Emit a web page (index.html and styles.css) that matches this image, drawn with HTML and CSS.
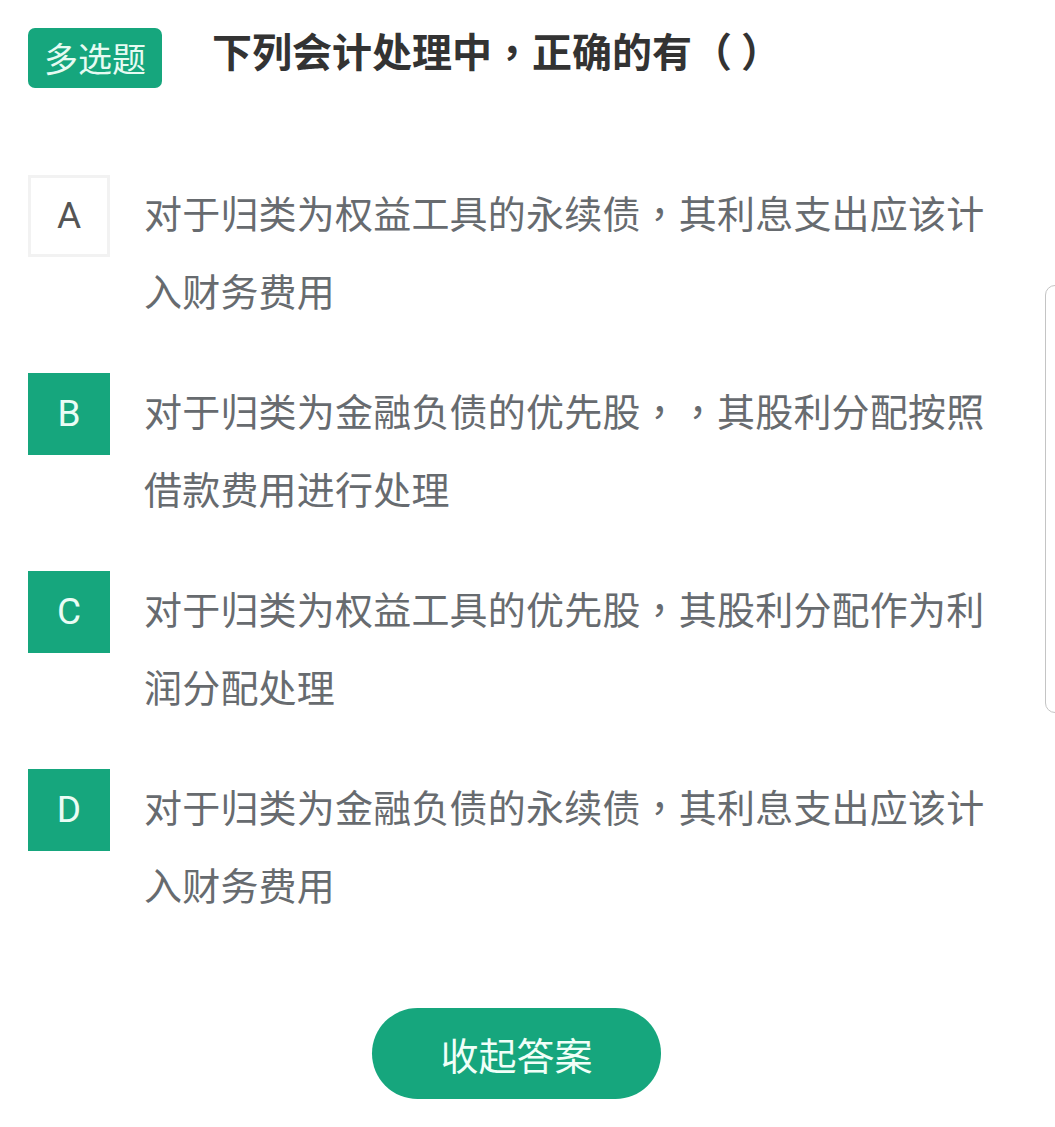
FILE: index.html
```html
<!DOCTYPE html>
<html lang="zh-CN">

<head>
    <meta charset="utf-8">
    <meta name="viewport" content="width=device-width, initial-scale=1.0">
    <title>多选题</title>

    <link rel="stylesheet" href="styles.css">
</head>

<body>

<header class="kop">
    <span class="type">多选题</span>
    <h1>下列会计处理中<span class="tegn" lang="zh-TW">，</span>正确的有<span class="tegn" lang="zh-TW">（ ）</span></h1>
</header>

<main>
    <section id="valg">
        <article class="valg">
            <div class="bogstav">A</div>
            <p>对于归类为权益工具的永续债<span class="tegn" lang="zh-TW">，</span>其利息支出应该计入财务费用</p>
        </article>
        <article class="valg valgt">
            <div class="bogstav">B</div>
            <p>对于归类为金融负债的优先股<span class="tegn" lang="zh-TW">，，</span>其股利分配按照借款费用进行处理</p>
        </article>
        <article class="valg valgt">
            <div class="bogstav">C</div>
            <p>对于归类为权益工具的优先股<span class="tegn" lang="zh-TW">，</span>其股利分配作为利润分配处理</p>
        </article>
        <article class="valg valgt">
            <div class="bogstav">D</div>
            <p>对于归类为金融负债的永续债<span class="tegn" lang="zh-TW">，</span>其利息支出应该计入财务费用</p>
        </article>
    </section>

    <div class="knap-boks">
        <button class="knap">收起答案</button>
    </div>
</main>

<div class="rulle"></div>

</body>

</html>
```

FILE: styles.css
```css
body {
    margin: 0;
    background: #fff;
    font-family: "Noto Sans CJK SC", "Noto Sans", sans-serif;
    overflow: hidden;
}

/* centrerede kommaer og parenteser som på telefonen */
.tegn {
    font-family: "Noto Sans CJK TC", "Noto Sans CJK SC", sans-serif;
}

.kop {
    display: flex;
    align-items: center;
    padding: 28px 0 0 28px;
    height: 60px;
}

.type {
    box-sizing: border-box;
    width: 134px;
    height: 60px;
    border-radius: 7px;
    background: #16a67d;
    color: #e6fbf2;
    font-size: 34px;
    line-height: 60px;
    text-align: center;
}

.kop h1 {
    margin: 0 0 16px 50px;
    font-size: 40px;
    font-weight: bold;
    color: #333;
    line-height: 50px;
}

#valg {
    display: flex;
    flex-direction: column;
    gap: 44px;
    padding: 87px 0 0 28px;
}

.valg {
    display: flex;
    align-items: flex-start;
}

.bogstav {
    box-sizing: border-box;
    flex: none;
    width: 82px;
    height: 82px;
    border: 3px solid #f2f2f2;
    color: #555;
    font-family: Roboto, "Liberation Sans", sans-serif;
    font-size: 37px;
    line-height: 76px;
    text-align: center;
}

.valgt .bogstav {
    background: #16a67d;
    border-color: #16a67d;
    color: #eafcf5;
}

.valg p {
    width: 860px;
    margin: -2px 0 0 34px;
    font-size: 38px;
    letter-spacing: 0.2px;
    line-height: 78px;
    color: #676b6f;
}

.knap-boks {
    display: flex;
    justify-content: center;
    padding: 85px 22px 0 0;
}

.knap {
    width: 289px;
    height: 91px;
    border: none;
    border-radius: 46px;
    background: #16a67d;
    color: #f0fff8;
    font-family: "Noto Sans CJK SC", sans-serif;
    font-size: 38px;
}

.rulle {
    position: absolute;
    top: 285px;
    right: -12px;
    width: 20px;
    height: 426px;
    border: 1px solid #c4c4c4;
    border-radius: 10px;
}
```
